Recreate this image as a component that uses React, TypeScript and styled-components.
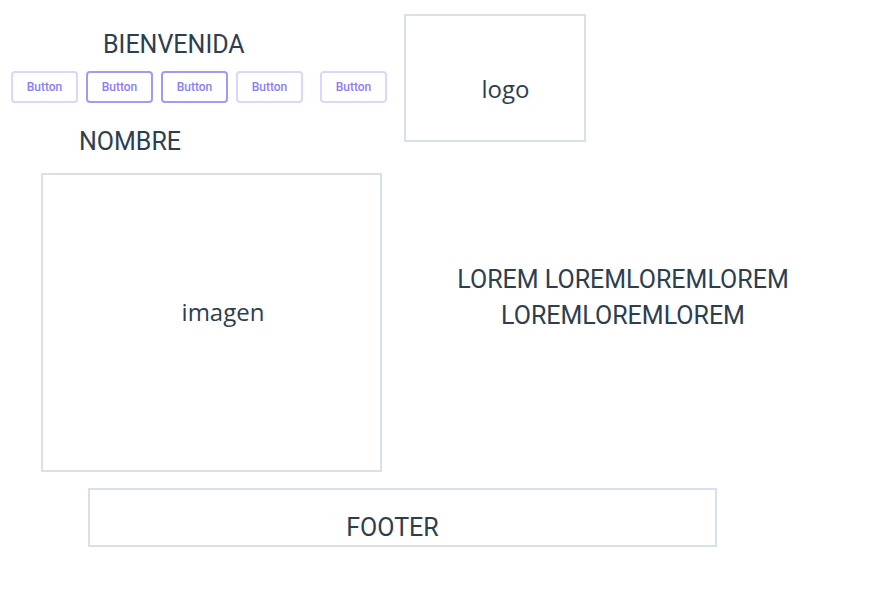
import styled, { createGlobalStyle } from "styled-components";

const GlobalStyle = createGlobalStyle`
  body {
    margin: 0;
    background: #fff;
    font-family: Roboto, "Noto Sans", sans-serif;
    color: #2c3e50;
  }
`;

const buttons = [
  { id: 1, strong: false, extra: 0 },
  { id: 2, strong: true, extra: 0 },
  { id: 3, strong: true, extra: 0 },
  { id: 4, strong: false, extra: 0 },
  { id: 5, strong: false, extra: 9 },
];

function App() {
  return (
    <Page>
      <GlobalStyle />
      <TopRow>
        <HeaderCol>
          <Title $indent={103}>BIENVENIDA</Title>
          <ButtonRow>
            {buttons.map((b) => (
              <OutlineButton key={b.id} $strong={b.strong} $extra={b.extra}>
                Button
              </OutlineButton>
            ))}
          </ButtonRow>
          <Name $indent={79}>NOMBRE</Name>
        </HeaderCol>
        <LogoBox>
          <BoxLabel>logo</BoxLabel>
        </LogoBox>
      </TopRow>

      <MiddleRow>
        <ImageBox>
          <BoxLabel>imagen</BoxLabel>
        </ImageBox>
        <LoremCol>
          <Lorem>
            LOREM LOREMLOREMLOREM
            <br />
            LOREMLOREMLOREM
          </Lorem>
        </LoremCol>
      </MiddleRow>

      <Footer>
        <FooterText>FOOTER</FooterText>
      </Footer>
    </Page>
  );
}

export default App;

const Page = styled.div`
  width: 888px;
  display: flex;
  flex-direction: column;
`;

const TopRow = styled.div`
  display: flex;
  align-items: flex-start;
`;

const HeaderCol = styled.div`
  width: 404px;
  display: flex;
  flex-direction: column;
`;

const Heading = styled.div<{ $indent: number }>`
  padding-left: ${(p) => p.$indent}px;
  font-size: 25px;
  line-height: 30px;
  font-weight: 400;
  color: #2c3e50;
`;

const Title = styled(Heading)`
  margin-top: 30px;
`;

const Name = styled(Heading)`
  margin-top: 24px;
`;

const ButtonRow = styled.div`
  display: flex;
  gap: 8px;
  margin-top: 11px;
  padding-left: 11px;
`;

const OutlineButton = styled.button<{ $strong: boolean; $extra: number }>`
  width: 67px;
  height: 32px;
  margin-left: ${(p) => p.$extra}px;
  padding: 0;
  background: #fff;
  border: 2px solid ${(p) => (p.$strong ? "#a49af4" : "#dcd6fc")};
  border-radius: 4px;
  color: #8a7ef3;
  font-family: Roboto, sans-serif;
  font-size: 12px;
  font-weight: 500;
  cursor: pointer;
`;

const Box = styled.div`
  box-sizing: border-box;
  border: 2px solid #d8e0e8;
  display: flex;
  justify-content: center;
  align-items: flex-start;
`;

const LogoBox = styled(Box)`
  width: 182px;
  height: 128px;
  margin-top: 14px;
  padding: 56px 0 0 21px;
`;

const BoxLabel = styled.span`
  font-family: "Open Sans", sans-serif;
  font-size: 24px;
  color: #2c3e50;
`;

const MiddleRow = styled.div`
  display: flex;
  align-items: flex-start;
  margin-top: 16px;
`;

const ImageBox = styled(Box)`
  width: 341px;
  height: 299px;
  margin-left: 41px;
  padding: 120px 0 0 23px;
`;

const LoremCol = styled.div`
  flex: 1;
  display: flex;
  justify-content: center;
  padding-right: 24px;
  margin-top: 89px;
`;

const Lorem = styled.p`
  margin: 0;
  text-align: center;
  font-size: 25px;
  line-height: 36px;
  color: #2c3e50;
`;

const Footer = styled.div`
  box-sizing: border-box;
  width: 629px;
  height: 59px;
  margin: 16px 0 0 88px;
  border: 2px solid #d8e0e8;
  display: flex;
  justify-content: center;
  padding: 23px 20px 0 0;
`;

const FooterText = styled.span`
  font-size: 25px;
  line-height: 30px;
  color: #2c3e50;
`;
